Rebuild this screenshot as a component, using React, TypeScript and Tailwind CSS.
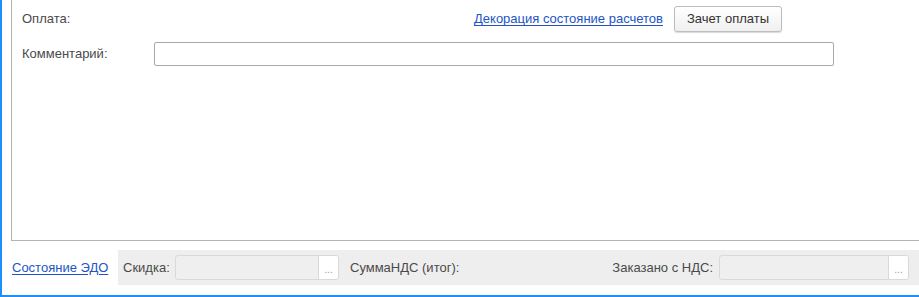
import React from "react";

const font = { fontFamily: '"Liberation Sans", Arial, sans-serif' };

const SelectBox = ({ width }: { width: string }) => (
  <div className={`flex h-[25px] ${width} rounded-[3px] border border-[#d9d9d9] bg-[#efefef] overflow-hidden`}>
    <div className="flex-1" />
    <div className="w-[20px] bg-white border-l border-[#d9d9d9] flex items-center justify-center text-[10px] text-[#9a9a9a] leading-none pt-[4px]">
      ...
    </div>
  </div>
);

const App = () => {
  return (
    <div
      className="w-[919px] h-[297px] flex flex-col bg-white border-l-2 border-b-2 border-[#1e8ffa] text-[13px] text-[#4a4a4a]"
      style={font}
    >
      <div className="ml-[9px] h-[241px] border-l border-b border-[#b4b4b4] flex flex-col pl-[10px] pt-[6px]">
        <div className="flex items-center w-[760px] h-[26px]">
          <span>Оплата:</span>
          <a href="#" className="ml-auto text-[#2355c4] underline underline-offset-2">
            Декорация состояние расчетов
          </a>
          <button className="ml-[11px] h-[26px] w-[108px] rounded-[3px] border border-[#bcbcbc] bg-gradient-to-b from-white to-[#f0f0f0] shadow-[0_1px_1px_rgba(0,0,0,0.15)] text-[#333333]">
            Зачет оплаты
          </button>
        </div>
        <div className="flex items-center mt-[10px]">
          <span className="w-[132px]">Комментарий:</span>
          <div className="w-[680px] h-[24px] rounded-[2px] border border-[#a9a9a9] bg-white" />
        </div>
      </div>
      <div className="flex items-center pt-[9px] pl-[10px]">
        <a href="#" className="text-[#2355c4] underline underline-offset-2 w-[106px]">
          Состояние ЭДО
        </a>
        <div className="flex-1 h-[35px] bg-[#eeeeee] flex items-center pl-[5px] pr-[10px]">
          <span className="w-[52px]">Скидка:</span>
          <SelectBox width="w-[164px]" />
          <span className="ml-[11px]">СуммаНДС (итог):</span>
          <span className="ml-auto mr-[6px]">Заказано с НДС:</span>
          <SelectBox width="w-[190px]" />
        </div>
      </div>
    </div>
  );
};

export default App;
